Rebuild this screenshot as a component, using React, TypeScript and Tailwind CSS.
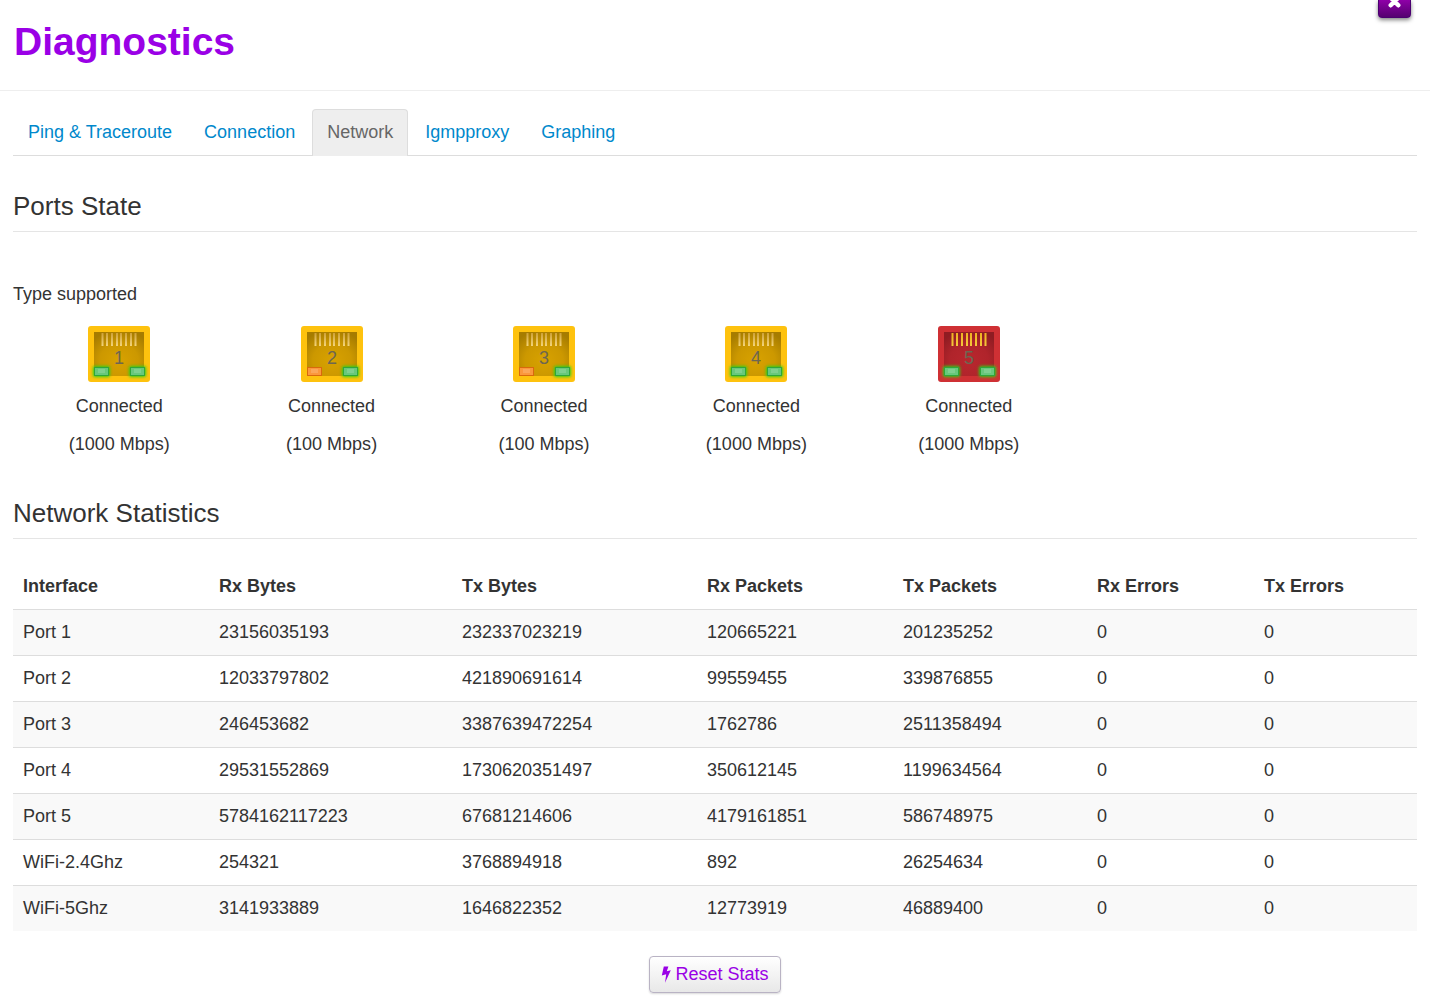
import React from "react"

const tabs = ["Ping & Traceroute", "Connection", "Network", "Igmpproxy", "Graphing"]

const ports = [
  { id: 1, speed: "1000 Mbps", leds: ["green", "green"], wan: false },
  { id: 2, speed: "100 Mbps", leds: ["orange", "green"], wan: false },
  { id: 3, speed: "100 Mbps", leds: ["orange", "green"], wan: false },
  { id: 4, speed: "1000 Mbps", leds: ["green", "green"], wan: false },
  { id: 5, speed: "1000 Mbps", leds: ["green", "green"], wan: true },
]

const columns = [
  { name: "Interface", width: "w-[196px]" },
  { name: "Rx Bytes", width: "w-[243px]" },
  { name: "Tx Bytes", width: "w-[245px]" },
  { name: "Rx Packets", width: "w-[196px]" },
  { name: "Tx Packets", width: "w-[194px]" },
  { name: "Rx Errors", width: "w-[167px]" },
  { name: "Tx Errors", width: "w-[163px]" },
]

const stats = [
  ["Port 1", "23156035193", "232337023219", "120665221", "201235252", "0", "0"],
  ["Port 2", "12033797802", "421890691614", "99559455", "339876855", "0", "0"],
  ["Port 3", "246453682", "3387639472254", "1762786", "2511358494", "0", "0"],
  ["Port 4", "29531552869", "1730620351497", "350612145", "1199634564", "0", "0"],
  ["Port 5", "5784162117223", "67681214606", "4179161851", "586748975", "0", "0"],
  ["WiFi-2.4Ghz", "254321", "3768894918", "892", "26254634", "0", "0"],
  ["WiFi-5Ghz", "3141933889", "1646822352", "12773919", "46889400", "0", "0"],
]

const Led = ({ x, color }: { x: number; color: string }) => (
  <g>
    {color == "green" && (
      <rect x={x - 1} y="40" width="17" height="11" rx="2" fill="#2fd012" filter="url(#glow)" />
    )}
    <rect
      x={x + 0.5}
      y="41.5"
      width="14"
      height="8"
      fill={color == "green" ? "#68c87c" : "#fb983c"}
      stroke={color == "green" ? "#2fa63a" : "#d9690c"}
    />
    <rect x={x + 4} y="43" width="7" height="4" fill="#fff" opacity="0.15" />
  </g>
)

const PortIcon = ({ id, leds, wan }: { id: number; leds: string[]; wan: boolean }) => (
  <svg width="62" height="56" viewBox="0 0 62 56" className="block">
    <defs>
      <filter id="glow" x="-50%" y="-50%" width="200%" height="200%">
        <feGaussianBlur stdDeviation="1.5" />
      </filter>
      <radialGradient id={`inside-${id}`} cx="50%" cy="65%" r="70%">
        <stop offset="0%" stopColor={wan ? "#b8272e" : "#d8a200"} />
        <stop offset="55%" stopColor={wan ? "#b0242b" : "#cc9800"} />
        <stop offset="100%" stopColor={wan ? "#8f1c22" : "#a67c00"} />
      </radialGradient>
      <linearGradient id={`pin-${id}`} x1="0" y1="0" x2="0" y2="1">
        <stop offset="0%" stopColor={wan ? "#f0b020" : "#cfa238"} />
        <stop offset="100%" stopColor={wan ? "#f5c93c" : "#f3d47a"} />
      </linearGradient>
    </defs>
    <rect width="62" height="56" rx="3" fill={wan ? "#cf3034" : "#fec20e"} />
    <rect x="6" y="6" width="50" height="44" fill={`url(#inside-${id})`} />
    {[13.5, 18, 23, 28, 32, 37, 42, 46.5].map((x) => (
      <rect key={x} x={x} y="7" width="2" height="13" fill={`url(#pin-${id})`} />
    ))}
    <Led x={6} color={leds[0]} />
    <Led x={42} color={leds[1]} />
    <text x="31" y="38" textAnchor="middle" fontSize="18" fill="#6d6652">
      {id}
    </text>
  </svg>
)

export default () => {
  return (
    <div className="bg-white pb-3 font-['Liberation_Sans',Arial,sans-serif] text-[18px] leading-[29px] text-[#333]">
      <header className="flex items-start justify-between border-b border-[#eee] pr-[19px] pl-[14px]">
        <h1 className="pt-[17px] pb-[24px] text-[39px] leading-[49px] font-bold text-[#9a00e6]">Diagnostics</h1>
        <button
          type="button"
          aria-label="Close"
          className="flex h-[18px] w-[33px] items-end justify-center rounded-b-[4px] border border-t-0 border-[#4a0070] bg-linear-to-b from-[#8f00a8] to-[#560070] pb-[9px] shadow-[0_2px_4px_rgba(0,0,0,0.5)]"
        >
          <svg width="13" height="8" viewBox="0 0 13 8">
            <path d="M2.5 -2.5 L10.3 5.3 M10.5 -2.5 L2.7 5.3" stroke="#fff" strokeWidth="4.4" strokeLinecap="round" />
          </svg>
        </button>
      </header>

      <main className="px-[13px] pt-[18px]">
        <nav className="flex gap-[2px] border-b border-[#ddd]">
          {tabs.map((tab) => (
            <a
              key={tab}
              href="#"
              className={
                tab == "Network"
                  ? "-mb-px rounded-t-[4px] border border-b-0 border-[#ddd] bg-[#eee] px-[14px] pt-[8px] pb-[9px] text-[#666]"
                  : "border border-b-0 border-transparent px-[14px] py-[8px] text-[#0088cc]"
              }
            >
              {tab}
            </a>
          ))}
        </nav>

        <h2 className="mt-[30px] border-b border-[#e5e5e5] pb-[5px] text-[26px] leading-[40px]">Ports State</h2>
        <p className="mt-[48px]">Type supported</p>
        <div className="mt-[17px] grid w-full max-w-[1062px] grid-cols-5">
          {ports.map((port) => (
            <div key={port.id} className="flex flex-col items-center">
              <PortIcon id={port.id} leds={port.leds} wan={port.wan} />
              <p className="mt-[10px]">Connected</p>
              <p className="mt-[9px]">({port.speed})</p>
            </div>
          ))}
        </div>

        <h2 className="mt-[34px] border-b border-[#e5e5e5] pb-[5px] text-[26px] leading-[40px]">Network Statistics</h2>
        <table className="mt-[25px] w-full table-fixed border-separate border-spacing-0 text-left">
          <thead>
            <tr>
              {columns.map((col) => (
                <th key={col.name} className={`px-[10px] py-[8px] ${col.width}`}>
                  {col.name}
                </th>
              ))}
            </tr>
          </thead>
          <tbody>
            {stats.map((row) => (
              <tr key={row[0]} className="odd:bg-[#f9f9f9]">
                {row.map((cell, idx) => (
                  <td key={idx} className="border-t border-[#ddd] px-[10px] py-[8px]">
                    {cell}
                  </td>
                ))}
              </tr>
            ))}
          </tbody>
        </table>

        <div className="mt-[25px] flex justify-center">
          <button
            type="button"
            className="flex h-[37px] items-center gap-[4px] rounded-[4px] border border-[#b9b3c4] bg-linear-to-b from-white to-[#e8e8e8] px-[11px] text-[#9a00e6] shadow-[0_1px_2px_rgba(0,0,0,0.15)]"
          >
            <svg width="10" height="17" viewBox="0 0 10 17" fill="currentColor">
              <path d="M2.8 0.4 L7.4 0.4 L5.8 5.2 L9.8 4.3 L4 16.8 L5.2 8.3 L0.8 9.4 Z" />
            </svg>
            Reset Stats
          </button>
        </div>
      </main>
    </div>
  )
}
